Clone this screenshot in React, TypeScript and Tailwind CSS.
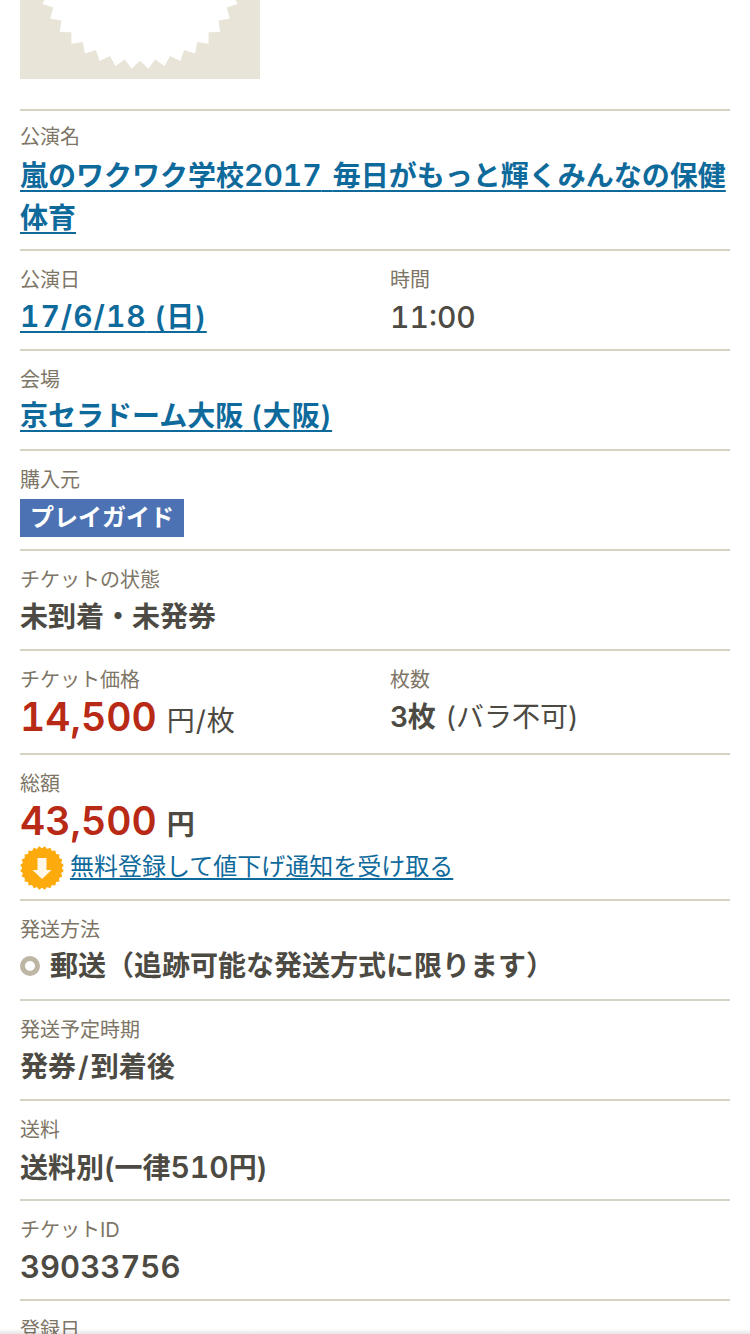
import React from "react";

const font = { fontFamily: '"Inter", "Noto Sans CJK JP", sans-serif' };

function burst(cx: number, cy: number, outer: number, inner: number, n: number) {
  const pts: string[] = [];
  for (let i = 0; i < n * 2; i++) {
    const r = i % 2 === 0 ? inner : outer;
    const a = (i * Math.PI) / n;
    pts.push(`${(cx + r * Math.sin(a)).toFixed(1)},${(cy + r * Math.cos(a)).toFixed(1)}`);
  }
  return pts.join(" ");
}

function Label({ children }: { children: React.ReactNode }) {
  return <div className="h-[30px] text-[20px] font-normal leading-[30px] text-[#7d7566]">{children}</div>;
}

function N({ children }: { children: React.ReactNode }) {
  return <span className="text-[30px] tabular-nums">{children}</span>;
}

function Value({ children }: { children: React.ReactNode }) {
  return <div className="h-[40px] text-[28px] font-semibold leading-[44px] text-[#4c4a43]">{children}</div>;
}

function LinkValue({ children }: { children: React.ReactNode }) {
  return (
    <a className="text-[28px] font-semibold leading-[42px] text-[#0f6a9c] underline decoration-2 underline-offset-[4px]">
      {children}
    </a>
  );
}

function Row({ children }: { children: React.ReactNode }) {
  return <div className="border-t-2 border-[#d6d3c4] pb-[14px] pt-[14px]">{children}</div>;
}

function TwoCol({ left, right }: { left: React.ReactNode; right: React.ReactNode }) {
  return (
    <div className="flex">
      <div className="w-[370px]">{left}</div>
      <div className="flex-1">{right}</div>
    </div>
  );
}

export default function App() {
  return (
    <div className="relative h-[1334px] w-[750px] overflow-hidden bg-white" style={font}>
      <div className="px-[20px]">
        <svg width="240" height="79" viewBox="0 0 240 79" className="block">
          <rect width="240" height="79" fill="#e8e4d8" />
          <polygon points={burst(120, -36.5, 105.5, 97.2, 40)} fill="#ffffff" />
        </svg>

        <div className="mt-[30px]">
          <div className="border-t-2 border-[#d6d3c4] pb-[11px] pt-[11px]">
            <Label>公演名</Label>
            <div className="mt-[2px] h-[84px] text-[28px] leading-[42px]">
              <LinkValue>
                嵐のワクワク学校<N>2017</N>
                <span className="tracking-[4px]"> </span>毎日がもっと輝くみんなの保健体育
              </LinkValue>
            </div>
          </div>
          <Row>
            <TwoCol
              left={
                <>
                  <Label>公演日</Label>
                  <div className="h-[40px] text-[28px] leading-[40px]">
                    <LinkValue>
                      <span className="text-[30px] tabular-nums tracking-[1px]">17/6/18</span>
                      <span className="tracking-[1px]"> (日)</span>
                    </LinkValue>
                  </div>
                </>
              }
              right={
                <>
                  <Label>時間</Label>
                  <div className="h-[40px] text-[30px] font-medium leading-[44px] text-[#4c4a43]">
                    <span className="tabular-nums">11:00</span>
                  </div>
                </>
              }
            />
          </Row>
          <Row>
            <Label>会場</Label>
            <div className="h-[40px] text-[28px] leading-[40px]">
              <LinkValue>
                京セラドーム大阪<span className="tracking-[1px]"> (大阪)</span>
              </LinkValue>
            </div>
          </Row>
          <Row>
            <Label>購入元</Label>
            <div className="h-[40px]">
              <span className="mt-[4px] inline-block h-[38px] bg-[#4c72b3] px-[10px] text-[24px] font-semibold leading-[38px] text-white">
                プレイガイド
              </span>
            </div>
          </Row>
          <Row>
            <Label>チケットの状態</Label>
            <Value>未到着・未発券</Value>
          </Row>
          <div className="border-t-2 border-[#d6d3c4] pb-[16px] pt-[14px]">
            <TwoCol
              left={
                <>
                  <Label>チケット価格</Label>
                  <div className="flex h-[42px] items-baseline leading-[44px]">
                    <span className="text-[39px] font-semibold tabular-nums text-[#b82a16]">14,500</span>
                    <span className="ml-[10px] text-[28px] text-[#4c4a43]">
                      円<span className="px-[1px]">/</span>枚
                    </span>
                  </div>
                </>
              }
              right={
                <>
                  <Label>枚数</Label>
                  <div className="flex h-[42px] items-baseline leading-[44px] text-[#4c4a43]">
                    <span className="text-[28px] font-semibold">3枚</span>
                    <span className="ml-[10px] text-[28px]">(バラ不可)</span>
                  </div>
                </>
              }
            />
          </div>
          <div className="border-t-2 border-[#d6d3c4] pb-[8px] pt-[14px]">
            <Label>総額</Label>
            <div className="flex h-[44px] items-baseline leading-[43px]">
              <span className="text-[39px] font-semibold tabular-nums text-[#b82a16]">43,500</span>
              <span className="ml-[10px] text-[28px] font-semibold text-[#4c4a43]">円</span>
            </div>
            <div className="flex h-[48px] items-center">
              <svg width="44" height="44" viewBox="0 0 44 44" className="mt-[2px] shrink-0">
                <polygon points={burst(22, 22, 22, 19.800, 24)} fill="#fdab0c" />
                <path d="M17.500 12h9v12h5L22 33 12.500 24h5z" fill="#fff8e8" />
              </svg>
              <a className="ml-[6px] text-[24px] leading-[30px] text-[#0f6a9c] underline underline-offset-[3px]">
                無料登録して値下げ通知を受け取る
              </a>
            </div>
          </div>
          <Row>
            <Label>発送方法</Label>
            <div className="flex h-[40px] items-center pt-[2px] text-[28px] font-semibold text-[#4c4a43]">
              <span className="mr-[10px] h-[20px] w-[20px] rounded-full border-[5px] border-[#bdb6a4] bg-white" />
              郵送（追跡可能な発送方式に限ります）
            </div>
          </Row>
          <Row>
            <Label>発送予定時期</Label>
            <Value>
              発券<span className="px-[2px]">/</span>到着後
            </Value>
          </Row>
          <Row>
            <Label>送料</Label>
            <Value>
              送料別(一律<N>510</N>円)
            </Value>
          </Row>
          <Row>
            <Label>チケットID</Label>
            <Value>
              <span className="text-[31px] tabular-nums">39033756</span>
            </Value>
          </Row>
          <Row>
            <Label>登録日</Label>
          </Row>
        </div>
      </div>
      <div className="absolute inset-x-0 bottom-0 h-[5px] bg-gradient-to-b from-transparent to-black/10" />
    </div>
  );
}
